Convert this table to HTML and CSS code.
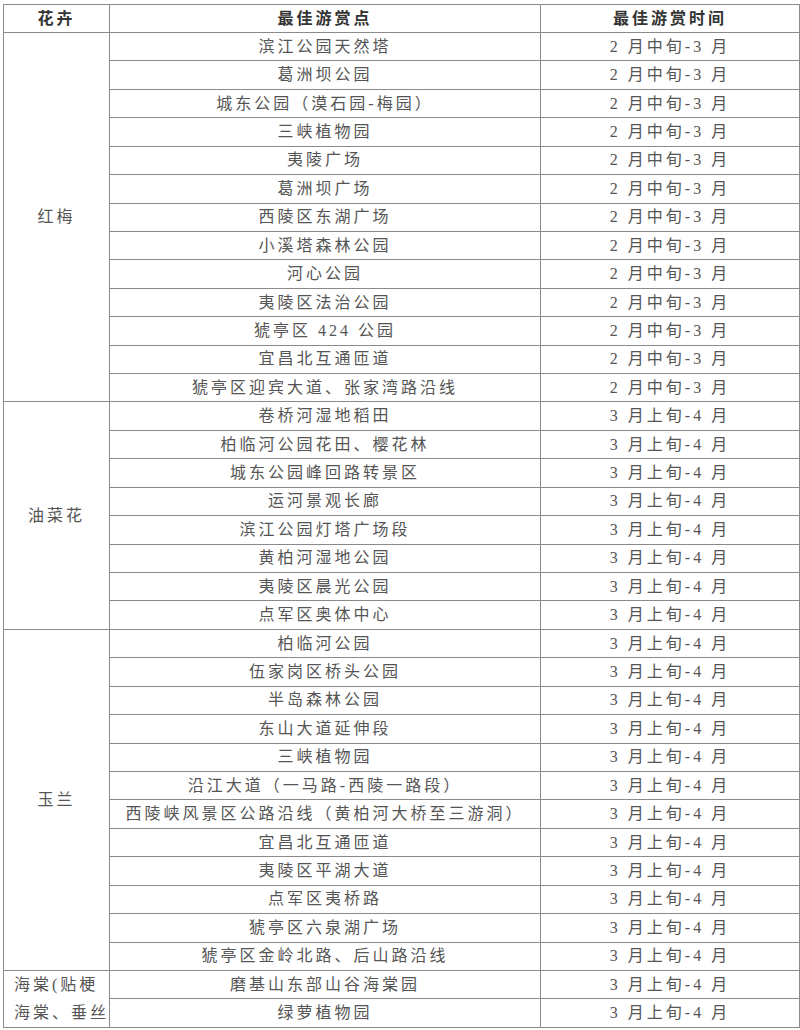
FILE: index.html
```html
<!DOCTYPE html>
<html lang="zh-CN">
<head>
<meta charset="utf-8">
<title>赏花地点</title>
<link rel="stylesheet" href="styles.css">
</head>
<body>
<table class="flowers">
  <colgroup>
    <col class="c1"><col class="c2"><col class="c3">
  </colgroup>
  <thead>
    <tr class="head"><th>花卉</th><th>最佳游赏点</th><th>最佳游赏时间</th></tr>
  </thead>
  <tbody>
    <tr><td class="kind" rowspan="13">红梅</td><td>滨江公园天然塔</td><td>2 月中旬-3 月</td></tr>
    <tr><td>葛洲坝公园</td><td>2 月中旬-3 月</td></tr>
    <tr><td>城东公园（漠石园-梅园）</td><td>2 月中旬-3 月</td></tr>
    <tr><td>三峡植物园</td><td>2 月中旬-3 月</td></tr>
    <tr><td>夷陵广场</td><td>2 月中旬-3 月</td></tr>
    <tr><td>葛洲坝广场</td><td>2 月中旬-3 月</td></tr>
    <tr><td>西陵区东湖广场</td><td>2 月中旬-3 月</td></tr>
    <tr><td>小溪塔森林公园</td><td>2 月中旬-3 月</td></tr>
    <tr><td>河心公园</td><td>2 月中旬-3 月</td></tr>
    <tr><td>夷陵区法治公园</td><td>2 月中旬-3 月</td></tr>
    <tr><td>猇亭区 424 公园</td><td>2 月中旬-3 月</td></tr>
    <tr><td>宜昌北互通匝道</td><td>2 月中旬-3 月</td></tr>
    <tr><td>猇亭区迎宾大道、张家湾路沿线</td><td>2 月中旬-3 月</td></tr>

    <tr><td class="kind" rowspan="8">油菜花</td><td>卷桥河湿地稻田</td><td>3 月上旬-4 月</td></tr>
    <tr><td>柏临河公园花田、樱花林</td><td>3 月上旬-4 月</td></tr>
    <tr><td>城东公园峰回路转景区</td><td>3 月上旬-4 月</td></tr>
    <tr><td>运河景观长廊</td><td>3 月上旬-4 月</td></tr>
    <tr><td>滨江公园灯塔广场段</td><td>3 月上旬-4 月</td></tr>
    <tr><td>黄柏河湿地公园</td><td>3 月上旬-4 月</td></tr>
    <tr><td>夷陵区晨光公园</td><td>3 月上旬-4 月</td></tr>
    <tr><td>点军区奥体中心</td><td>3 月上旬-4 月</td></tr>

    <tr><td class="kind" rowspan="12">玉兰</td><td>柏临河公园</td><td>3 月上旬-4 月</td></tr>
    <tr><td>伍家岗区桥头公园</td><td>3 月上旬-4 月</td></tr>
    <tr><td>半岛森林公园</td><td>3 月上旬-4 月</td></tr>
    <tr><td>东山大道延伸段</td><td>3 月上旬-4 月</td></tr>
    <tr><td>三峡植物园</td><td>3 月上旬-4 月</td></tr>
    <tr><td>沿江大道（一马路-西陵一路段）</td><td>3 月上旬-4 月</td></tr>
    <tr><td>西陵峡风景区公路沿线（黄柏河大桥至三游洞）</td><td>3 月上旬-4 月</td></tr>
    <tr><td>宜昌北互通匝道</td><td>3 月上旬-4 月</td></tr>
    <tr><td>夷陵区平湖大道</td><td>3 月上旬-4 月</td></tr>
    <tr><td>点军区夷桥路</td><td>3 月上旬-4 月</td></tr>
    <tr><td>猇亭区六泉湖广场</td><td>3 月上旬-4 月</td></tr>
    <tr><td>猇亭区金岭北路、后山路沿线</td><td>3 月上旬-4 月</td></tr>

    <tr><td class="kind left" rowspan="2"><div class="clip"><span class="line">海棠(贴梗</span><span class="line">海棠、垂丝</span></div></td><td>磨基山东部山谷海棠园</td><td>3 月上旬-4 月</td></tr>
    <tr><td>绿萝植物园</td><td>3 月上旬-4 月</td></tr>
  </tbody>
</table>
</body>
</html>
```

FILE: styles.css
```css
html, body {
  margin: 0;
  padding: 0;
  background: #ffffff;
}

body {
  padding: 4px 0 0 3px;
  font-family: "Liberation Serif", "Noto Sans CJK SC", serif;
  color: #555555;
}

.flowers {
  border-collapse: collapse;
  width: 796px;
  table-layout: fixed;
}

.c1 { width: 106px; }
.c2 { width: 431px; }
.c3 { width: 259px; }

.flowers th,
.flowers td {
  border: 1px solid #8a8a8a;
  padding: 0;
  text-align: center;
  vertical-align: middle;
  font-size: 16px;
  letter-spacing: 3px;
  white-space: nowrap;
  line-height: 20px;
}

.flowers th {
  height: 27px;
  font-weight: 700;
  color: #333333;
}

.flowers td {
  height: 27.43px;
  font-weight: 400;
}

.kind.left {
  text-align: left;
  vertical-align: top;
}

.clip {
  overflow: hidden;
  display: flex;
  flex-direction: column;
  padding-left: 10px;
}

.line {
  display: block;
  line-height: 28px;
  height: 28px;
}
```
